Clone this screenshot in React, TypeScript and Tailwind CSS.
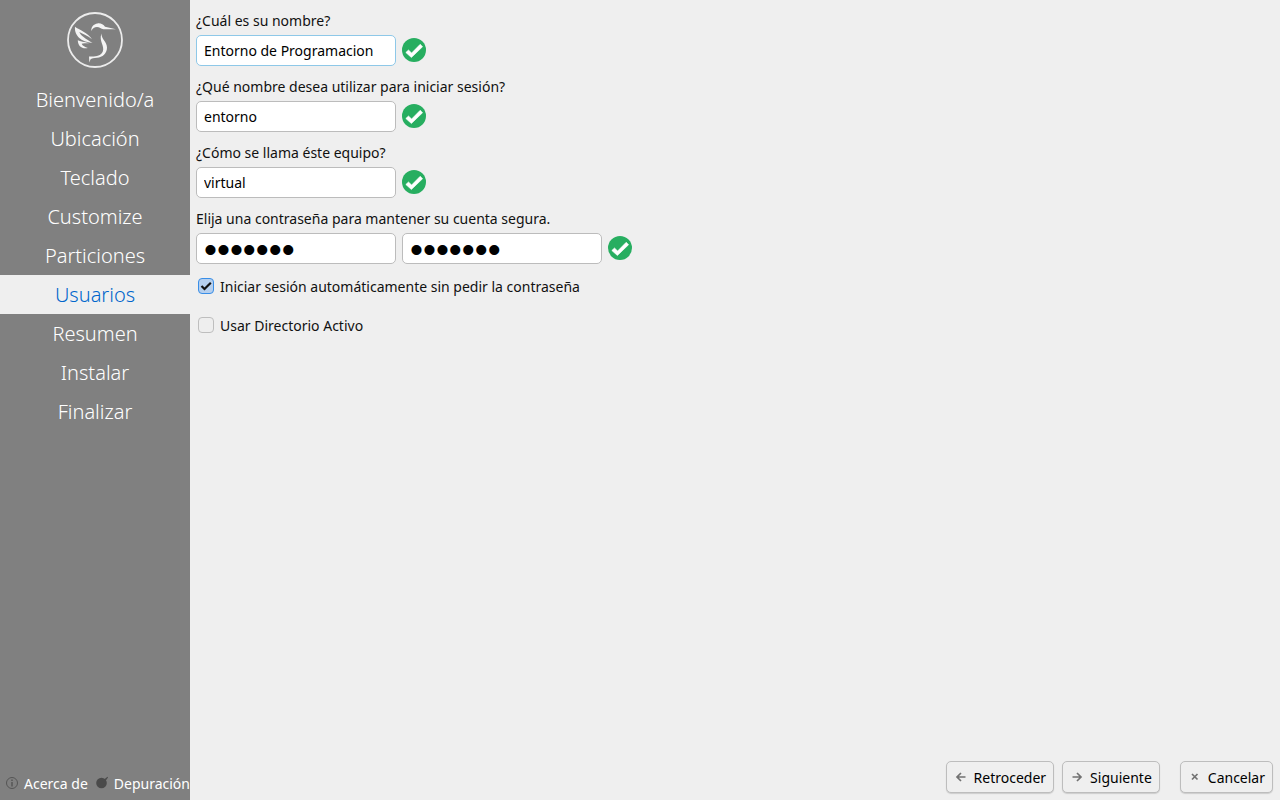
import type { ReactNode } from 'react';

const steps = [
  'Bienvenido/a',
  'Ubicación',
  'Teclado',
  'Customize',
  'Particiones',
  'Usuarios',
  'Resumen',
  'Instalar',
  'Finalizar',
];

const currentStep = 'Usuarios';

function HummingbirdLogo() {
  return (
    <svg viewBox="0 0 80 70" className="h-[70px] w-20" role="img" aria-label="Lubuntu">
      <circle cx="40" cy="35" r="27" fill="none" stroke="#ececec" strokeWidth="1.8" />
      <path
        fill="#f4f4f4"
        d="M61 24.300 L50 21.800 C48.500 19.200 45.500 18 42.500 18.400 C38.500 19 36 22 36.300 26 C37.500 23.500 39.500 22 42 22 C44.500 22 46 23.700 48.500 24.200 Z"
      />
      <path
        fill="#f4f4f4"
        d="M46.500 28.500 C46.200 34 52 37 52 42.500 C52 48.500 47.500 52.300 42 52.800 C39 53 36.500 53.300 35.400 54.600 L34.400 57.500 L34 51.400 C39.500 51.800 45.500 51.500 47.800 46.500 C50 41 43.500 36 46.500 28.500 Z"
      />
      <path
        fill="#f4f4f4"
        d="M20 21.800 C24 25 33 27.500 37 34.300 C32.500 30.500 28 29 24.300 27 C25.500 30.500 31 34 37.500 38 C31.500 37.300 27 35.500 24.300 33 C21.500 30.500 19.500 26.500 20 21.800 Z"
      />
      <path
        fill="#f4f4f4"
        d="M22.800 35.200 C25 36.500 29.500 36.700 34 38.200 C30.500 38.300 28 38.200 26.600 38.800 C27.600 41 30 42 32.800 43 C27 44.200 22.800 41 22.800 35.200 Z"
      />
    </svg>
  );
}

function ValidIcon() {
  return (
    <svg viewBox="0 0 24 24" className="mt-[3px] h-6 w-6 shrink-0" aria-hidden="true">
      <circle cx="12" cy="12" r="12" fill="#27ae60" />
      <path d="M3.800 14.500 L6.500 12 L9.600 15 L18.200 6.300 L20.600 8.700 L9.400 19.500 Z" fill="#fff" stroke="#fff" strokeWidth="0.600" strokeLinejoin="round" />
    </svg>
  );
}

const inputClass = 'h-[31px] w-[200px] rounded-[5px] border bg-white px-[7px] text-black outline-none';
const passwordClass =
  "h-[31px] w-[200px] rounded-[5px] border border-[#bcbcbc] bg-white px-[7px] pt-0.5 font-['Liberation_Sans',sans-serif] text-[37px] text-black outline-none";

function Field({ id, label, value, active = false }: { id: string; label: string; value: string; active?: boolean }) {
  return (
    <div>
      <label htmlFor={id} className="block h-[26px] leading-6">
        {label}
      </label>
      <div className="flex items-start gap-1.5">
        <input
          id={id}
          type="text"
          defaultValue={value}
          className={`${inputClass} ${active ? 'border-[#8ec8e8]' : 'border-[#bcbcbc]'}`}
        />
        <ValidIcon />
      </div>
    </div>
  );
}

function CheckOption({ label, checked = false }: { label: string; checked?: boolean }) {
  return (
    <label className="flex h-6 w-fit items-center gap-1.5 pl-0.5">
      <span className="grid h-4 w-4">
        <input
          type="checkbox"
          defaultChecked={checked}
          className="peer col-start-1 row-start-1 h-4 w-4 appearance-none rounded-[4px] border border-[#bebebe] bg-[#eeeeee] checked:border-[#398ee7] checked:bg-[#b5cfee]"
        />
        <svg viewBox="0 0 16 16" className="pointer-events-none col-start-1 row-start-1 hidden h-4 w-4 peer-checked:block" aria-hidden="true">
          <path d="M3.500 8 L6.500 11 L12.800 4.700" fill="none" stroke="#111" strokeWidth="2.200" />
        </svg>
      </span>
      {label}
    </label>
  );
}

function NavButton({ icon, children }: { icon: ReactNode; children: ReactNode }) {
  return (
    <button
      type="button"
      className="flex h-8 items-center gap-[5px] rounded-[5px] border border-[#bdbdbd] bg-[#efefef] pr-[7px] pl-1.5 text-black shadow-[0_1px_1px_#cccccc]"
    >
      <svg viewBox="0 0 16 16" className="h-4 w-4" fill="none" stroke="#727272" strokeWidth="1.700" aria-hidden="true">
        {icon}
      </svg>
      {children}
    </button>
  );
}

export default function App() {
  return (
    <div className="flex min-h-screen bg-[#efefef] font-['Noto_Sans',sans-serif] text-[14px] text-[#111]">
      <aside className="flex w-[190px] shrink-0 flex-col overflow-hidden bg-[#808080] text-white">
        <div className="flex justify-center pt-[5px] pb-[5px]">
          <HummingbirdLogo />
        </div>
        <nav aria-label="Pasos">
          <ol>
            {steps.map((step) => (
              <li
                key={step}
                aria-current={step === currentStep ? 'step' : undefined}
                className={`h-[39px] text-center text-[20px] leading-[39px] font-light ${
                  step === currentStep ? 'bg-[#efefef] text-[#0066cc]' : ''
                }`}
              >
                {step}
              </li>
            ))}
          </ol>
        </nav>
        <div className="mt-auto mb-px flex h-8 gap-1.5 pl-1">
          <button type="button" className="flex shrink-0 items-center gap-1">
            <svg viewBox="0 0 16 16" className="h-4 w-4" fill="none" stroke="#555" aria-hidden="true">
              <circle cx="8" cy="8" r="5.500" />
              <path d="M8 4.500v1.500M8 7v4.500" strokeWidth="1.500" />
            </svg>
            Acerca de
          </button>
          <button type="button" className="flex shrink-0 items-center gap-1">
            <svg viewBox="0 0 16 16" className="h-4 w-4" fill="#4a4a4a" aria-hidden="true">
              <circle cx="7.500" cy="8" r="5.300" />
              <path d="M10 4.500 L13.500 1.800 L14 2.400 L11.500 6 Z" />
            </svg>
            Depuración
          </button>
        </div>
      </aside>

      <main className="flex min-w-0 flex-1 flex-col">
        <form className="flex flex-col gap-[9px] pt-[9px] pl-1.5">
          <Field id="full-name" label="¿Cuál es su nombre?" value="Entorno de Programacion" active />
          <Field id="login" label="¿Qué nombre desea utilizar para iniciar sesión?" value="entorno" />
          <Field id="hostname" label="¿Cómo se llama éste equipo?" value="virtual" />
          <div>
            <label htmlFor="password" className="block h-[26px] leading-6">
              Elija una contraseña para mantener su cuenta segura.
            </label>
            <div className="flex items-start gap-1.5">
              <input id="password" type="password" defaultValue="virtual" className={passwordClass} />
              <input type="password" aria-label="Repita la contraseña" defaultValue="virtual" className={passwordClass} />
              <ValidIcon />
            </div>
          </div>
          <div className="flex flex-col gap-[15px] pt-px">
            <CheckOption label="Iniciar sesión automáticamente sin pedir la contraseña" checked />
            <CheckOption label="Usar Directorio Activo" />
          </div>
        </form>

        <footer className="mt-auto flex justify-end gap-2 pr-[7px] pb-[7px]">
          <NavButton icon={<path d="M12.500 8H4M8 4 L4 8 L8 12" />}>Retroceder</NavButton>
          <NavButton icon={<path d="M3.500 8H12M8 4 L12 8 L8 12" />}>Siguiente</NavButton>
          <div className="ml-3">
            <NavButton icon={<path d="M5 5 L10.500 10.500M10.500 5 L5 10.500" />}>Cancelar</NavButton>
          </div>
        </footer>
      </main>
    </div>
  );
}
